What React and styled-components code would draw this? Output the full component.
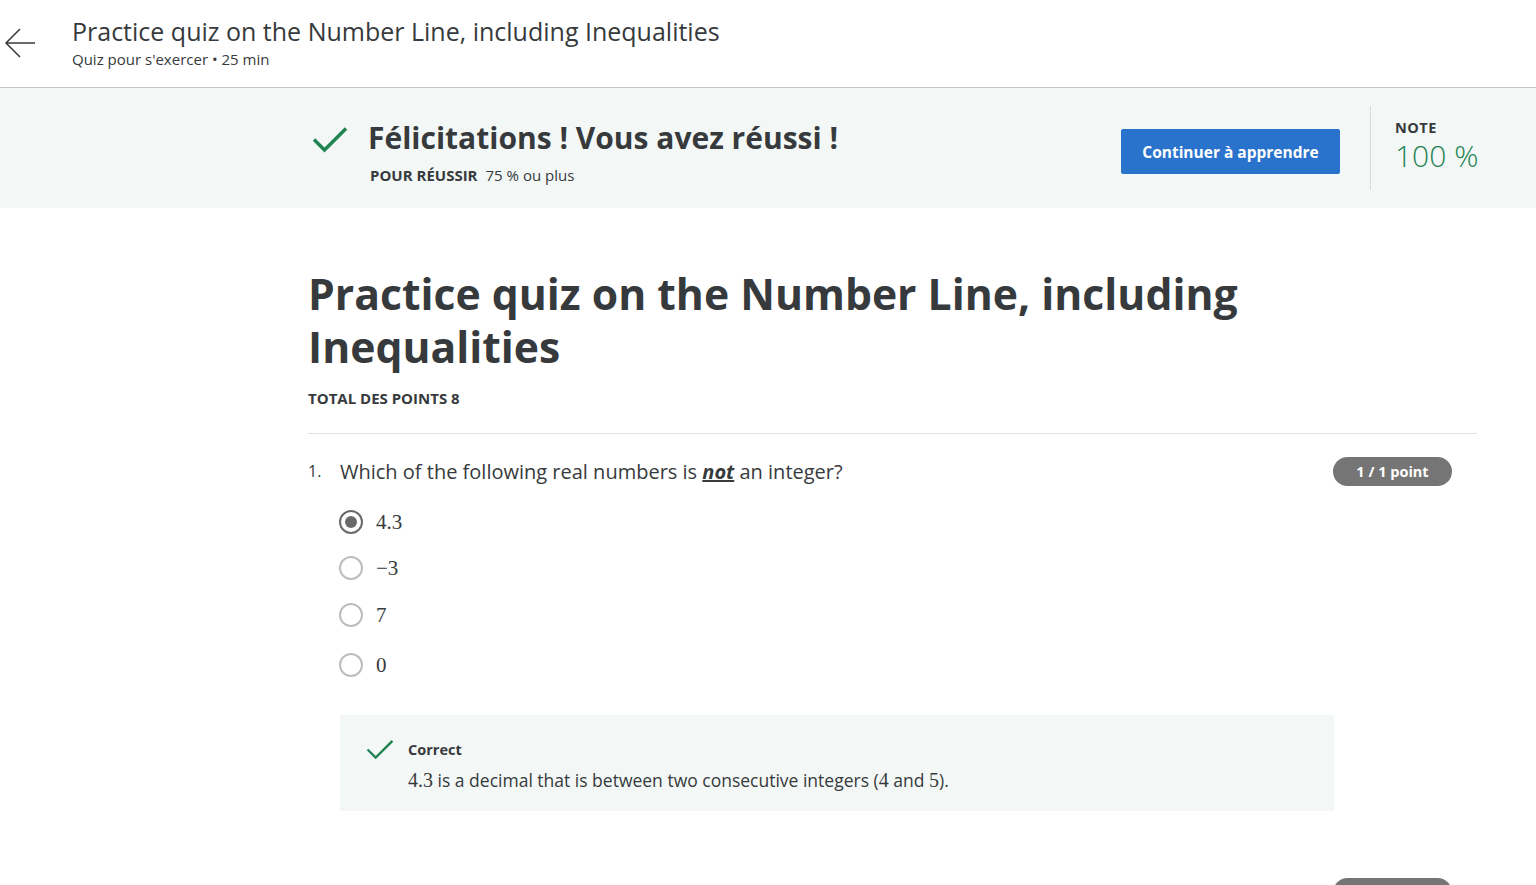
import React from 'react'
import styled, { createGlobalStyle } from 'styled-components'

const Global = createGlobalStyle`
  body {
    margin: 0;
    background: #fff;
    font-family: 'Open Sans', 'Noto Sans', sans-serif;
    color: #373a3c;
  }
`

const Page = styled.div`
  width: 1536px;
`

const Header = styled.header`
  height: 88px;
  display: flex;
  align-items: center;
  border-bottom: 1px solid #c4c4c4;
  box-sizing: border-box;
`

const BackButton = styled.button`
  width: 72px;
  height: 88px;
  border: none;
  background: none;
  padding: 0 0 0 4px;
  display: flex;
  align-items: center;
  color: #373a3c;
  margin-top: -2px;
`

const HeaderText = styled.div`
  display: flex;
  flex-direction: column;
  margin-top: -2px;
`

const HeaderTitle = styled.h1`
  margin: 0;
  font-size: 25px;
  font-weight: 400;
  line-height: 30px;
  color: #373a3c;
`

const HeaderSub = styled.div`
  font-size: 15px;
  line-height: 20px;
  margin-top: 3px;
  color: #373a3c;
`

const Banner = styled.section`
  background: #f3f8f6;
  height: 120px;
  display: flex;
  padding-left: 308px;
`

const BannerInner = styled.div`
  width: 1169px;
  display: flex;
  align-items: stretch;
`

const BannerMain = styled.div`
  flex: 1;
  display: flex;
  align-items: flex-start;
  gap: 20px;
  padding: 31px 0 0 4px;

  svg {
    margin-top: 7px;
  }
`

const BannerText = styled.div`
  display: flex;
  flex-direction: column;
`

const BannerTitle = styled.h2`
  margin: 0;
  font-size: 30px;
  font-weight: 700;
  line-height: 38px;
  color: #373a3c;
`

const PassLine = styled.div`
  margin-top: 8px;
  font-size: 15px;
  line-height: 20px;
  padding-left: 2px;
`

const PassLabel = styled.span`
  font-weight: 700;
  margin-right: 8px;
`

const PrimaryButton = styled.button`
  align-self: flex-start;
  height: 45px;
  width: 219px;
  border: none;
  border-radius: 2px;
  background: #2a73cc;
  color: #fff;
  font-family: inherit;
  font-size: 15.5px;
  font-weight: 700;
  margin: 41px 30px 0 0;
`

const GradeBox = styled.div`
  margin: 18px 0;
  border-left: 1px solid #dadada;
  padding: 13px 0 0 24px;
  width: 82px;
  display: flex;
  flex-direction: column;
`

const GradeLabel = styled.div`
  font-size: 14.5px;
  font-weight: 700;
  letter-spacing: 0.5px;
  line-height: 18px;
`

const GradeValue = styled.div`
  font-size: 30px;
  font-weight: 300;
  color: #1f8354;
  line-height: 38px;
  white-space: nowrap;
`

const Content = styled.main`
  padding-left: 308px;
  padding-top: 59px;
`

const ContentInner = styled.div`
  width: 1169px;
`

const QuizTitle = styled.h1`
  margin: 0;
  font-size: 42.7px;
  font-weight: 700;
  line-height: 53px;
  color: #373a3c;
`

const Total = styled.div`
  margin-top: 15px;
  font-size: 15px;
  font-weight: 700;
  line-height: 20px;
  padding-bottom: 25px;
  border-bottom: 1px solid #e1e1e1;
`

const Question = styled.div`
  padding-top: 22px;
  display: flex;
  flex-direction: column;
  padding-bottom: 66px;
`

const QuestionRow = styled.div`
  display: flex;
  align-items: flex-start;
`

const QNum = styled.span`
  width: 32px;
  font-size: 16px;
  line-height: 26px;
  padding-top: 2px;
`

const QText = styled.div`
  flex: 1;
  font-size: 20px;
  line-height: 28px;
  color: #373a3c;
  padding-top: ${p => p.$drop || 0}px;

  em {
    font-weight: 700;
    text-decoration: underline;
  }
`

const PointBadge = styled.span`
  background: #757575;
  color: #fff;
  border-radius: 15px;
  font-size: 14.5px;
  font-weight: 700;
  height: 29px;
  width: 119px;
  display: flex;
  align-items: center;
  justify-content: center;
  margin-right: 25px;
  margin-top: 1px;
`

const Options = styled.div`
  display: flex;
  flex-direction: column;
  padding-left: 32px;
  margin-top: 13px;
`

const Option = styled.label`
  display: flex;
  align-items: center;
  gap: 13px;
  height: ${p => p.$h}px;
`

const Radio = styled.span`
  width: 24px;
  height: 24px;
  box-sizing: border-box;
  border-radius: 50%;
  border: 2px solid ${p => (p.$checked ? '#6a6a6a' : '#bdbdbd')};
  display: flex;
  align-items: center;
  justify-content: center;
  margin-left: -1px;

  &::after {
    content: '';
    width: 12px;
    height: 12px;
    border-radius: 50%;
    background: ${p => (p.$checked ? '#6a6a6a' : 'transparent')};
  }
`

const MathText = styled.span`
  font-family: 'Liberation Serif', 'DejaVu Serif', serif;
  font-size: 21px;
  color: #373a3c;
`

const Feedback = styled.div`
  margin-left: 32px;
  margin-top: 24px;
  width: 994px;
  background: #f3f8f6;
  display: flex;
  gap: 14px;
  padding: 24px 26px 18px;
  box-sizing: border-box;
`

const FeedbackBody = styled.div`
  display: flex;
  flex-direction: column;
`

const FeedbackTitle = styled.div`
  font-size: 14.5px;
  font-weight: 700;
  line-height: 22px;
`

const FeedbackText = styled.div`
  margin-top: 6px;
  font-size: 17.5px;
  line-height: 26px;
  color: #373a3c;
`

const InlineMath = styled.span`
  font-family: 'Liberation Serif', 'DejaVu Serif', serif;
  font-size: 20px;
`

const Check = ({ size, stroke }) => (
  <svg width={size} height={size * 0.75} viewBox="0 0 36 27" fill="none">
    <path d="M2 13.5 L12.5 24 L34 2.5" stroke="#1f8354" strokeWidth={stroke} />
  </svg>
)

const options = [
  { label: '4.3', checked: true, h: 46 },
  { label: '−3', h: 46 },
  { label: '7', h: 48 },
  { label: '0', h: 52 },
]

export default function App() {
  return (
    <Page>
      <Global />
      <Header>
        <BackButton aria-label="back">
          <svg width="32" height="32" viewBox="0 0 32 32" fill="none">
            <path d="M31 16 H2 M16 2 L2 16 L16 30" stroke="#373a3c" strokeWidth="1.5" />
          </svg>
        </BackButton>
        <HeaderText>
          <HeaderTitle>Practice quiz on the Number Line, including Inequalities</HeaderTitle>
          <HeaderSub>Quiz pour s'exercer • 25 min</HeaderSub>
        </HeaderText>
      </Header>

      <Banner>
        <BannerInner>
          <BannerMain>
            <Check size={36} stroke={3.5} />
            <BannerText>
              <BannerTitle>Félicitations ! Vous avez réussi !</BannerTitle>
              <PassLine>
                <PassLabel>POUR RÉUSSIR</PassLabel>75 % ou plus
              </PassLine>
            </BannerText>
          </BannerMain>
          <PrimaryButton>Continuer à apprendre</PrimaryButton>
          <GradeBox>
            <GradeLabel>NOTE</GradeLabel>
            <GradeValue>100 %</GradeValue>
          </GradeBox>
        </BannerInner>
      </Banner>

      <Content>
        <ContentInner>
          <QuizTitle>Practice quiz on the Number Line, including Inequalities</QuizTitle>
          <Total>TOTAL DES POINTS 8</Total>

          <Question>
            <QuestionRow>
              <QNum>1.</QNum>
              <QText $drop={2}>
                Which of the following real numbers is <em>not</em> an integer?
              </QText>
              <PointBadge>1 / 1 point</PointBadge>
            </QuestionRow>
            <Options>
              {options.map(o => (
                <Option key={o.label} $h={o.h}>
                  <Radio $checked={o.checked} />
                  <MathText>{o.label}</MathText>
                </Option>
              ))}
            </Options>
            <Feedback>
              <Check size={28} stroke={3} />
              <FeedbackBody>
                <FeedbackTitle>Correct</FeedbackTitle>
                <FeedbackText>
                  <InlineMath>4.3</InlineMath> is a decimal that is between two consecutive integers (
                  <InlineMath>4</InlineMath> and <InlineMath>5</InlineMath>).
                </FeedbackText>
              </FeedbackBody>
            </Feedback>
          </Question>

          <QuestionRow>
            <QNum />
            <QText $drop={10}>Which of the following is true on the number line?</QText>
            <PointBadge>1 / 1 point</PointBadge>
          </QuestionRow>
        </ContentInner>
      </Content>
    </Page>
  )
}
